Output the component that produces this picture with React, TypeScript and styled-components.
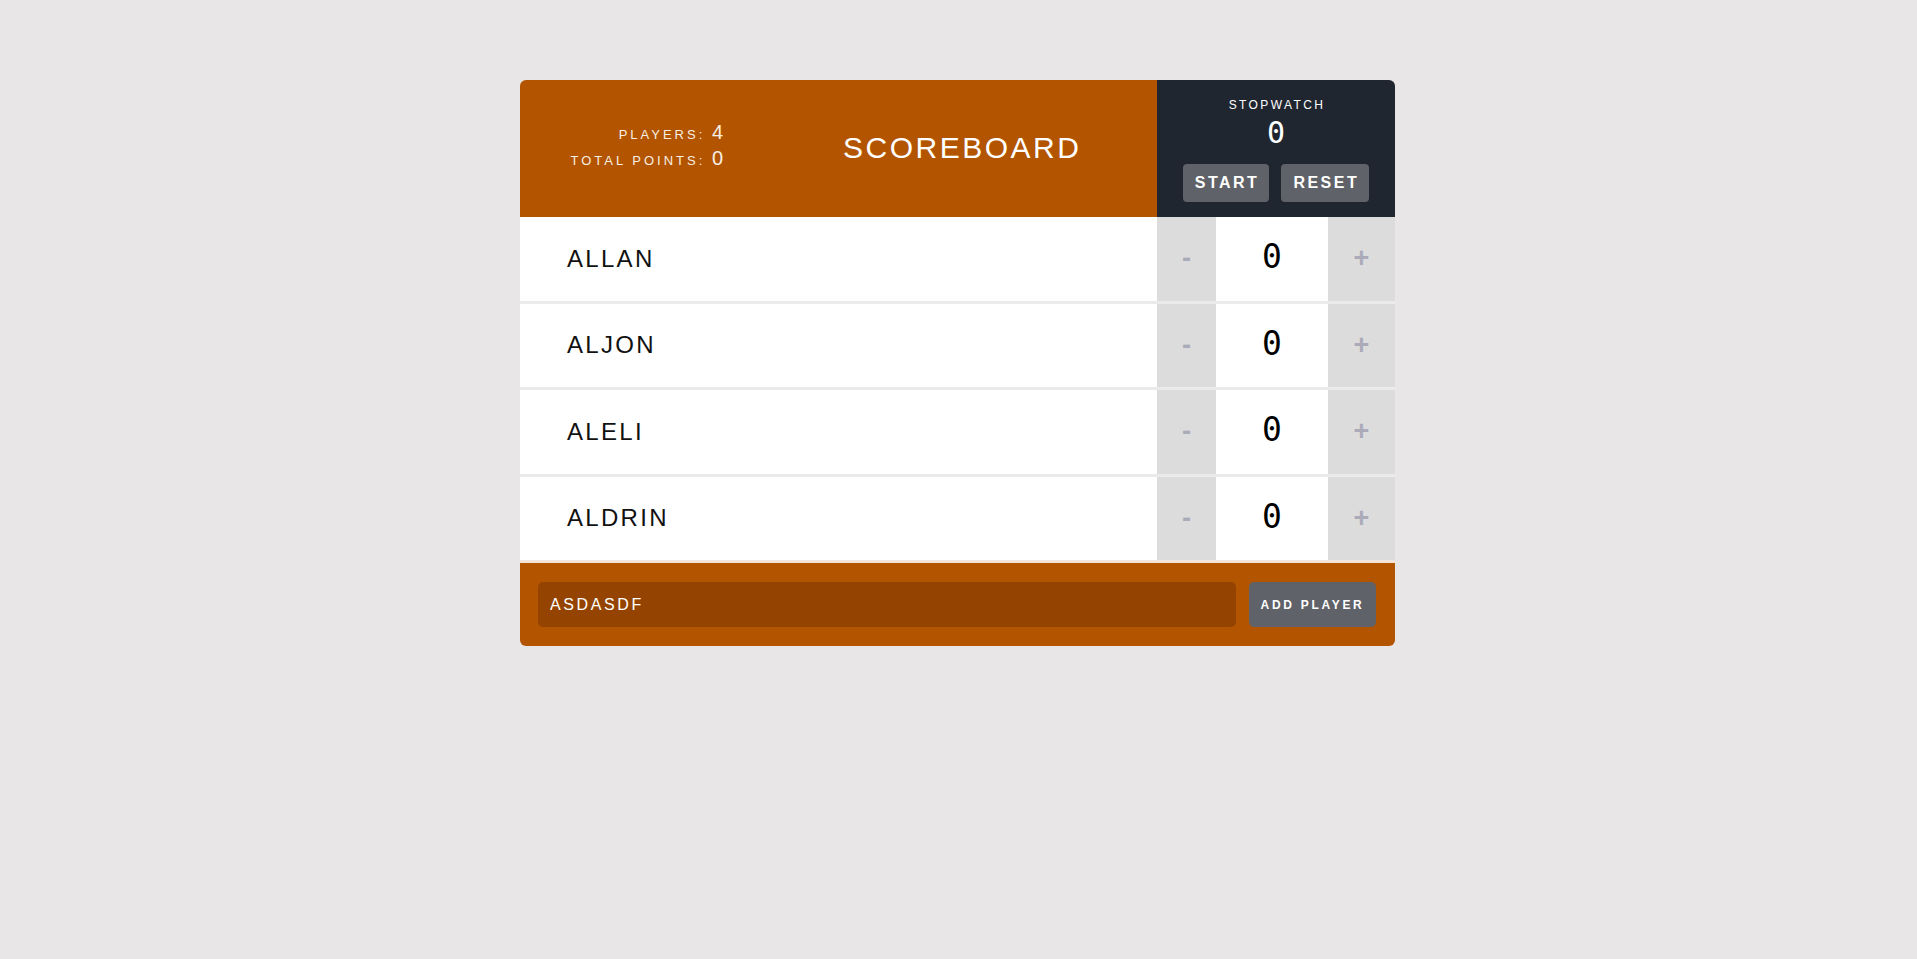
import React, { useState } from "react";
import styled, { createGlobalStyle } from "styled-components";

const GlobalStyle = createGlobalStyle`
  html, body {
    margin: 0;
    padding: 0;
    background: #e8e6e7;
    font-family: "Liberation Sans", Arial, sans-serif;
  }
  * { box-sizing: border-box; }
`;

const Page = styled.div`
  padding-top: 80px;
  padding-right: 2px;
  display: flex;
  justify-content: center;
`;

const Card = styled.div`
  width: 875px;
  border-radius: 6px;
  overflow: hidden;
  background: #ebebeb;
`;

const Header = styled.header`
  display: flex;
  height: 137px;
`;

const HeaderMain = styled.div`
  flex: 1;
  background: #b35400;
  display: flex;
  align-items: center;
`;

const Stats = styled.div`
  width: 203px;
  text-align: right;
  color: #f7efe2;
  display: flex;
  flex-direction: column;
  gap: 1px;
  padding-bottom: 5px;
`;

const StatLine = styled.div`
  line-height: 23px;
`;

const StatLabel = styled.span`
  font-size: 13px;
  letter-spacing: 3px;
  text-transform: uppercase;
`;

const StatValue = styled.span`
  font-size: 20px;
`;

const Title = styled.h1`
  margin: 0 0 0 120px;
  font-weight: normal;
  font-size: 30px;
  letter-spacing: 2.5px;
  color: #ffffff;
  padding-bottom: 2px;
`;

const Stopwatch = styled.div`
  width: 238px;
  background: #20262f;
  display: flex;
  flex-direction: column;
  align-items: center;
  padding-top: 18px;
`;

const StopwatchLabel = styled.div`
  font-size: 12px;
  letter-spacing: 2.4px;
  color: #ffffff;
  margin-left: 2px;
  line-height: 14px;
`;

const StopwatchTime = styled.div`
  font-family: "DejaVu Sans Mono", monospace;
  font-size: 30px;
  line-height: 34px;
  color: #ffffff;
  margin-top: 4px;
`;

const ButtonRow = styled.div`
  display: flex;
  gap: 12px;
  margin-top: 14px;
`;

const WatchButton = styled.button`
  height: 38px;
  padding: 0 10px 0 12px;
  border: none;
  border-radius: 4px;
  background: #5f6268;
  color: #ffffff;
  font-family: "Liberation Sans", Arial, sans-serif;
  font-weight: bold;
  font-size: 16px;
  letter-spacing: 2.5px;
  text-transform: uppercase;
  cursor: pointer;
`;

const Rows = styled.div`
  display: flex;
  flex-direction: column;
`;

const Row = styled.div<{ $last?: boolean }>`
  display: flex;
  height: 86.5px;
  border-bottom: 3px solid ${(p) => (p.$last ? "#f1e4da" : "#ebebeb")};
`;

const Name = styled.div`
  flex: 1;
  background: #ffffff;
  display: flex;
  align-items: center;
  padding-left: 47px;
  font-size: 24px;
  letter-spacing: 2.3px;
  color: #111111;
`;

const Counter = styled.div`
  display: flex;
  width: 238px;
`;

const CountButton = styled.button<{ $w: number }>`
  width: ${(p) => p.$w}px;
  border: none;
  background: #dcdcdc;
  color: #aaaab9;
  font-family: "Liberation Sans", Arial, sans-serif;
  font-weight: bold;
  font-size: 27px;
  padding: 0;
  cursor: pointer;
`;

const Score = styled.div`
  flex: 1;
  background: #ffffff;
  display: flex;
  align-items: center;
  justify-content: center;
  font-family: "DejaVu Sans Mono", monospace;
  font-size: 33px;
  color: #000000;
  padding-bottom: 4px;
`;

const Footer = styled.form`
  background: #b35400;
  display: flex;
  gap: 13px;
  padding: 19px 19px 19px 18px;
`;

const NameInput = styled.input`
  flex: 1;
  height: 45px;
  border: none;
  border-radius: 5px;
  background: #944400;
  color: #ffffff;
  padding: 0 12px;
  font-family: "Liberation Sans", Arial, sans-serif;
  font-size: 16px;
  letter-spacing: 2.6px;
  text-transform: uppercase;
  outline: none;
`;

const AddButton = styled.button`
  width: 127px;
  height: 45px;
  border: none;
  border-radius: 5px;
  background: #5f6268;
  color: #ffffff;
  font-family: "Liberation Sans", Arial, sans-serif;
  font-weight: bold;
  font-size: 12px;
  letter-spacing: 2.7px;
  text-transform: uppercase;
  padding: 0;
  cursor: pointer;
`;

const players = ["ALLAN", "ALJON", "ALELI", "ALDRIN"];

export default function App() {
  const [value, setValue] = useState("ASDASDF");
  return (
    <>
      <GlobalStyle />
      <Page>
        <Card>
          <Header>
            <HeaderMain>
              <Stats>
                <StatLine>
                  <StatLabel>Players: </StatLabel>
                  <StatValue>4</StatValue>
                </StatLine>
                <StatLine>
                  <StatLabel>Total Points: </StatLabel>
                  <StatValue>0</StatValue>
                </StatLine>
              </Stats>
              <Title>SCOREBOARD</Title>
            </HeaderMain>
            <Stopwatch>
              <StopwatchLabel>STOPWATCH</StopwatchLabel>
              <StopwatchTime>0</StopwatchTime>
              <ButtonRow>
                <WatchButton>Start</WatchButton>
                <WatchButton>Reset</WatchButton>
              </ButtonRow>
            </Stopwatch>
          </Header>
          <Rows>
            {players.map((p, i) => (
              <Row key={p} $last={i === players.length - 1}>
                <Name>{p}</Name>
                <Counter>
                  <CountButton $w={59}>-</CountButton>
                  <Score>0</Score>
                  <CountButton $w={67}>+</CountButton>
                </Counter>
              </Row>
            ))}
          </Rows>
          <Footer onSubmit={(e) => e.preventDefault()}>
            <NameInput value={value} onChange={(e) => setValue(e.target.value)} />
            <AddButton type="submit">Add Player</AddButton>
          </Footer>
        </Card>
      </Page>
    </>
  );
}
